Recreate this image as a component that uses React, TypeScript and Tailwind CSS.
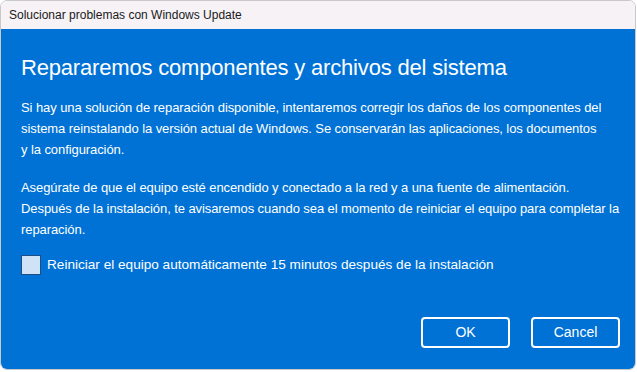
import React from 'react';

const FONT = { fontFamily: '"Segoe UI", "Liberation Sans", Arial, sans-serif' };

export default function App() {
  return (
    <div className="w-[637px] h-[372px] bg-white" style={FONT}>
      <div className="w-[636px] h-[370px] flex flex-col border border-[#c8c8c8] rounded-[7px] overflow-hidden">
        <div className="h-[28px] shrink-0 bg-[#f6f2f6] flex items-center pl-[8px] text-[12px] text-[#1a1a1a]">
          Solucionar problemas con Windows Update
        </div>
        <div className="flex-1 bg-[#0072d6] text-white flex flex-col px-[20px] pt-[25px]">
          <h1 className="text-[22px] leading-[28px] font-normal tracking-[-0.18px]">
            Repararemos componentes y archivos del sistema
          </h1>
          <div className="mt-[15px] text-[13px] leading-[21px] tracking-[-0.08px] whitespace-nowrap">
            <div>Si hay una solución de reparación disponible, intentaremos corregir los daños de los componentes del</div>
            <div>sistema reinstalando la versión actual de Windows. Se conservarán las aplicaciones, los documentos</div>
            <div>y la configuración.</div>
          </div>
          <div className="mt-[17px] text-[13px] leading-[21px] tracking-[-0.08px] whitespace-nowrap">
            <div>Asegúrate de que el equipo esté encendido y conectado a la red y a una fuente de alimentación.</div>
            <div>Después de la instalación, te avisaremos cuando sea el momento de reiniciar el equipo para completar la</div>
            <div>reparación.</div>
          </div>
          <label className="mt-[15px] flex items-center gap-[6px] text-[13.6px]">
            <span className="w-[20px] h-[20px] border border-[#1d4f85] bg-[#cfe2f6]" />
            Reiniciar el equipo automáticamente 15 minutos después de la instalación
          </label>
          <div className="mt-auto mb-[21px] -mr-[5px] flex justify-end gap-[21px]">
            <button className="w-[89px] h-[31px] rounded-[4px] border-2 border-white text-[14px] text-white">OK</button>
            <button className="w-[89px] h-[31px] rounded-[4px] border-2 border-white text-[14px] text-white">Cancel</button>
          </div>
        </div>
      </div>
    </div>
  );
}
